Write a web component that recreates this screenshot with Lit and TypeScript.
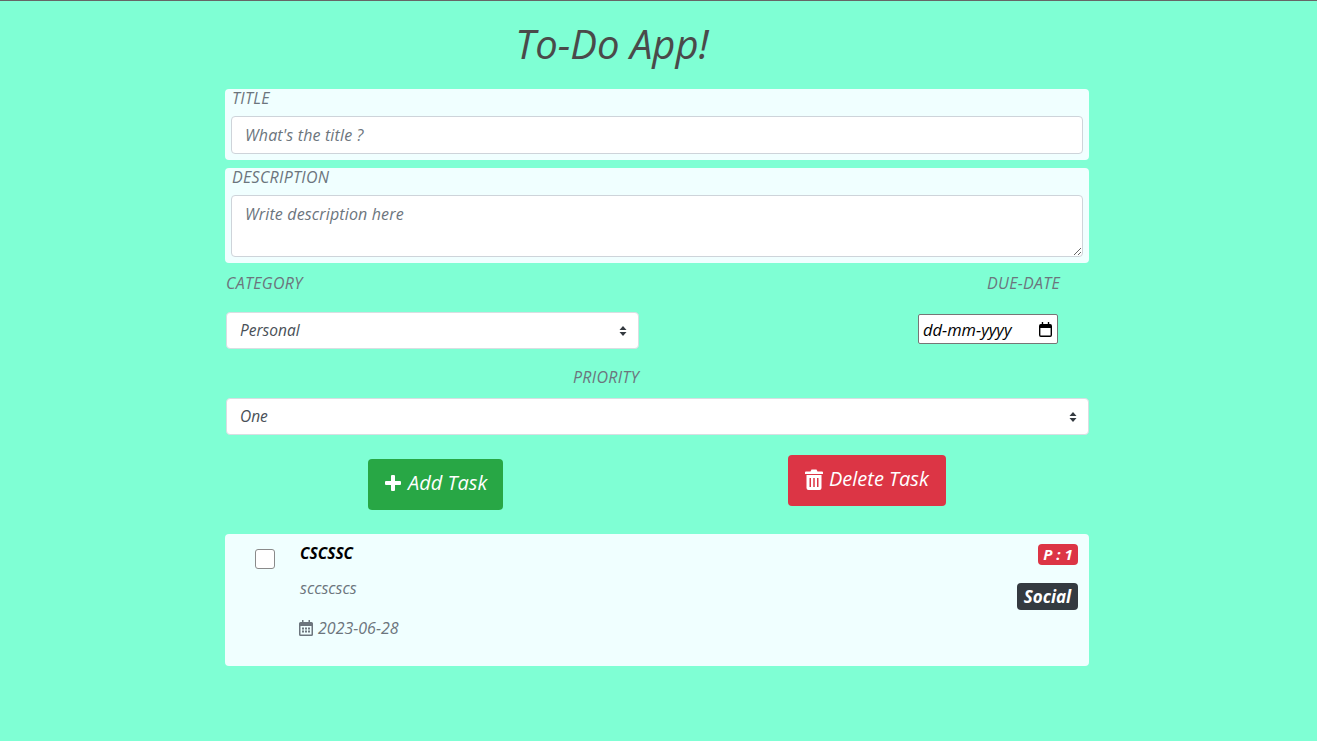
import { LitElement, html, css, unsafeCSS } from "lit";
import { customElement } from "lit/decorators.js";

const ARROWS = `url("data:image/svg+xml,%3csvg xmlns='http://www.w3.org/2000/svg' width='8' height='10' viewBox='0 0 8 10'%3e%3cpath fill='%23343a40' d='M4 0 7.500 4H.5zM4 10 .5 6h7z'/%3e%3c/svg%3e")`;

@customElement("app-root")
export class AppRoot extends LitElement {
  static styles = css`
    :host { display: block; min-height: 741px; background: #7fffd4; border-top: 1px solid #666; box-sizing: border-box; font-family: "Open Sans", sans-serif; font-style: italic; color: #495057; }
    * { box-sizing: border-box; }
    .wrap { width: 864px; margin-left: 225px; }
    h1 { margin: 0; font-size: 40px; font-weight: 400; color: #4a4a4a; text-align: center; width: 774px; height: 88px; padding-top: 17px; line-height: 52px; }
    .panel { background: azure; border-radius: 4px; padding: 0 6px; margin-bottom: 8px; }
    .p1 { height: 71px; }
    .p2 { height: 95px; }
    label { display: block; font-size: 16px; letter-spacing: .3px; color: #6c757d; line-height: 18px; padding-left: 1px; margin-bottom: 9px; }
    .ctl { width: 100%; display: block; background: #fff; border: 1px solid #ced4da; border-radius: 4px; padding: 6px 13px; font: italic 16px/24px "Open Sans", sans-serif; letter-spacing: .15px; color: #495057; outline: none; }
    .ctl::placeholder { color: #6c757d; opacity: 1; }
    input.ctl { height: 38px; }
    textarea.ctl { height: 62px; resize: vertical; }
    .row { display: flex; justify-content: space-between; }
    .cat { width: 414px; padding-left: 1px; }
    .due-col { width: 171px; }
    .head { line-height: 24px; margin-bottom: 0; padding-left: 0; }
    .due-head { padding-left: 69px; }
    .pri-head { padding-left: 348px; margin-top: 16px; margin-bottom: 9px; line-height: 24px; }
    select { display: block; width: 100%; height: 37px; appearance: none; border: 1px solid #d8dee2; border-radius: 4px; padding: 0 14px 2px 13px; font: italic 15.5px "Open Sans", sans-serif; color: #495057; background: #fff ${unsafeCSS(ARROWS)} no-repeat right 11px center; outline: none; }
    .cat select { margin-top: 17px; }
    .pri { margin-left: 1px; width: calc(100% - 1px); }
    .date { width: 140px; height: 30px; margin-top: 19px; border: 1px solid #767676; background: #fff; color: #000; font: italic 16.5px "Open Sans", sans-serif; display: flex; align-items: center; justify-content: space-between; padding: 0 5px 0 4px; border-radius: 2px; }
    .btns { margin-top: 20px; height: 79px; padding: 0 143px; align-items: flex-start; }
    button { display: flex; align-items: center; gap: 6px; height: 51px; border: 0; border-radius: 4px; color: #fff; font: italic 20px "Open Sans", sans-serif; padding: 0 0 4px 17px; white-space: nowrap; }
    button svg { flex: none; margin-top: 1px; }
    .add { background: #28a745; margin-top: 4px; width: 135px; padding-left: 16px; }
    .del { background: #dc3545; width: 158px; }
    .task { background: azure; height: 132px; border-radius: 4px; display: grid; grid-template-columns: 75px 1fr auto; padding-right: 11px; }
    .check { appearance: none; display: block; width: 20px; height: 20px; border: 1px solid #8a8a8a; border-radius: 3px; margin: 15px 0 0 30px; background: #fff; }
    .info { padding-top: 9px; }
    .name { font-size: 15.5px; font-weight: 700; color: #000; line-height: 20px; }
    .desc { font-size: 16px; color: #6c757d; line-height: 20px; margin-top: 15px; }
    .due { font-size: 16px; color: #6c757d; line-height: 20px; margin-top: 20px; margin-left: -1px; display: flex; align-items: center; gap: 5px; }
    .badges { display: flex; flex-direction: column; align-items: flex-end; padding-top: 10px; gap: 18px; }
    .badge { color: #fff; font-weight: 700; border-radius: 4px; text-align: center; }
    .b1 { background: #dc3545; font-size: 15px; height: 21px; line-height: 21px; width: 40px; }
    .b2 { background: #343a40; font-size: 17px; height: 27px; line-height: 27px; width: 61px; }
  `;

  render() {
    return html`
      <div class="wrap">
        <h1>To-Do App!</h1>
        <div class="panel p1">
          <label for="t">TITLE</label>
          <input id="t" class="ctl" placeholder="What's the title ?" />
        </div>
        <div class="panel p2">
          <label for="d">DESCRIPTION</label>
          <textarea id="d" class="ctl" placeholder="Write description here"></textarea>
        </div>
        <div class="row">
          <div class="cat">
            <label class="head">CATEGORY</label>
            <select><option>Personal</option></select>
          </div>
          <div class="due-col">
            <label class="head due-head">DUE-DATE</label>
            <div class="date">
              <span>dd-mm-yyyy</span>
              <svg width="13" height="15" viewBox="0 0 14 15" preserveAspectRatio="none">
                <path d="M3 0h1.500v2h5V0H11v2h1a2 2 0 0 1 2 2v9a2 2 0 0 1-2 2H2a2 2 0 0 1-2-2V4a2 2 0 0 1 2-2h1zM1.500 6v7a.5.5 0 0 0 .5.5h10a.5.5 0 0 0 .5-.5V6z" fill="#000"/>
              </svg>
            </div>
          </div>
        </div>
        <label class="pri-head">PRIORITY</label>
        <div class="pri"><select><option>One</option></select></div>
        <div class="row btns">
          <button class="add">
            <svg width="18" height="18" viewBox="0 0 18 18"><path d="M8 1h2a1 1 0 0 1 1 1v5h5a1 1 0 0 1 1 1v2a1 1 0 0 1-1 1h-5v5a1 1 0 0 1-1 1H8a1 1 0 0 1-1-1v-5H2a1 1 0 0 1-1-1V8a1 1 0 0 1 1-1h5V2a1 1 0 0 1 1-1z" fill="#fff"/></svg>
            Add Task
          </button>
          <button class="del">
            <svg width="18" height="21" viewBox="0 0 18 21"><path fill-rule="evenodd" d="M6.500.5h5l1 2H17a1 1 0 0 1 1 1V5H0V3.500a1 1 0 0 1 1-1h4.500zM1.500 6h15v13a2 2 0 0 1-2 2h-11a2 2 0 0 1-2-2zM4.500 9v9H6V9zM8.250 9v9h1.500V9zM12 9v9h1.500V9z" fill="#fff"/></svg>
            Delete Task
          </button>
        </div>
        <div class="task">
          <input type="checkbox" class="check" />
          <div class="info">
            <div class="name">CSCSSC</div>
            <div class="desc">sccscscs</div>
            <div class="due">
              <svg width="14" height="16" viewBox="0 0 14 16"><path fill-rule="evenodd" d="M3 0h1.500v2h5V0H11v2h1.500A1.500 1.500 0 0 1 14 3.500v11a1.500 1.500 0 0 1-1.500 1.500h-11A1.500 1.500 0 0 1 0 14.500v-11A1.500 1.500 0 0 1 1.500 2H3zM1.500 6v8.500h11V6zM3 7.500h2v2H3zM6 7.500h2v2H6zM9 7.500h2v2H9zM3 10.500h2v2H3zM6 10.500h2v2H6zM9 10.500h2v2H9z" fill="#6c757d"/></svg>
              2023-06-28
            </div>
          </div>
          <div class="badges">
            <div class="badge b1">P : 1</div>
            <div class="badge b2">Social</div>
          </div>
        </div>
      </div>
    `;
  }
}
